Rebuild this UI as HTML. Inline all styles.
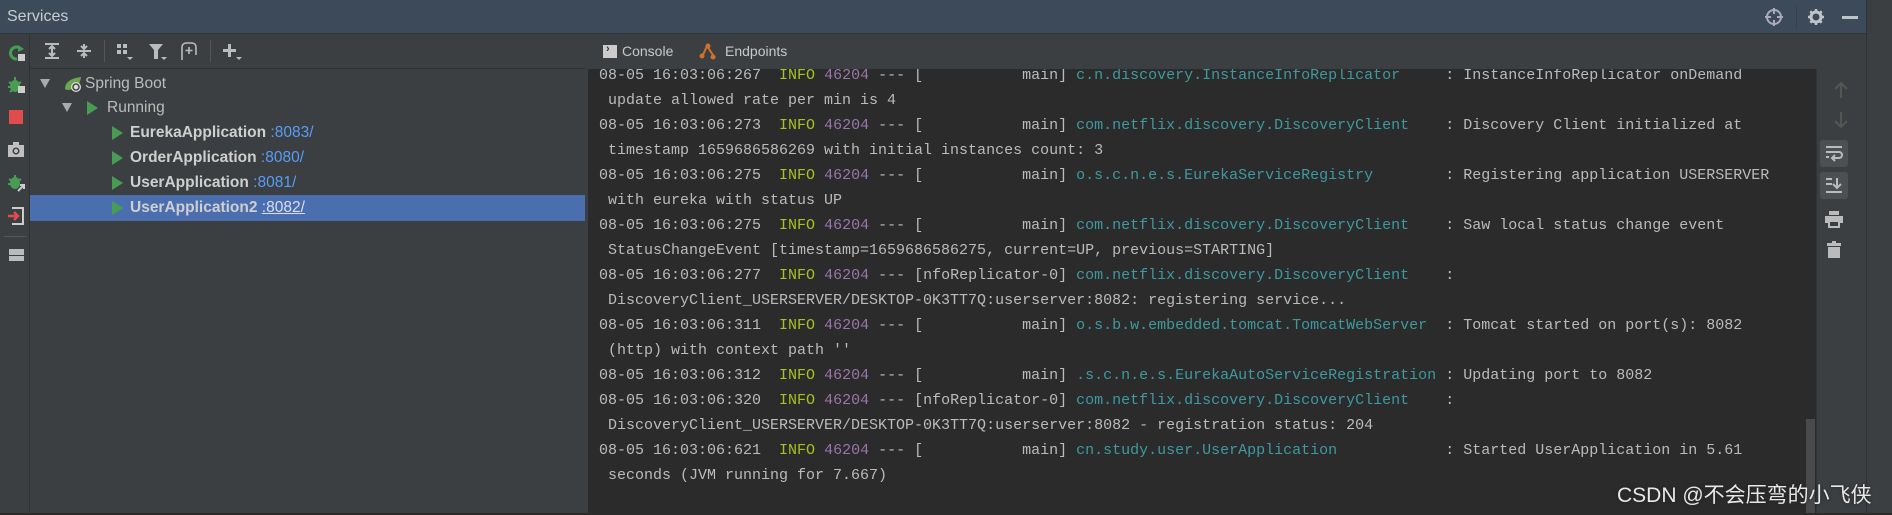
<!DOCTYPE html>
<html><head><meta charset="utf-8"><style>
*{margin:0;padding:0;box-sizing:border-box}
body{width:1892px;height:515px;overflow:hidden;background:#3c3f41;font-family:"Liberation Sans",sans-serif;position:relative;color:#bbb}
.abs{position:absolute}
#title{left:0;top:0;width:1866px;height:34px;background:#3d4a5a;border-bottom:1px solid #2f3640}
#title span{position:absolute;left:7px;top:8px;font-size:16px;color:#c8ccd0}
#rstrip{left:1866px;top:0;width:26px;height:515px;background:#3c3f41;border-left:1px solid #2e3134}
#lcol{left:0;top:34px;width:30px;height:481px;background:#3c3f41;border-right:1px solid #2f3133}
#tree{left:30px;top:34px;width:555px;height:481px;background:#3c3f41}
#tb{left:30px;top:34px;width:555px;height:35px;border-bottom:1px solid #323232}
.row{position:absolute;left:0;width:555px;height:25px;font-size:15.5px;line-height:25px;white-space:nowrap}
.row b{color:#cfcfcf}
.port{color:#589df6}
.sel{background:#4b6eaf}
.tri{position:absolute;width:0;height:0}
.play{border-left:11px solid #499c54;border-top:7px solid transparent;border-bottom:7px solid transparent;top:6px}
.down{border-top:9px solid #aaa;border-left:5px solid transparent;border-right:5px solid transparent;top:8px}
#tabs{left:586px;top:34px;width:1280px;height:35px;background:#3c3f41}
#tabs span{position:absolute;top:9px;font-size:14px;color:#c8c8c8}
#con{left:588px;top:69px;width:1228px;height:445px;background:#2b2b2b;overflow:hidden}
#log{position:absolute;left:11px;top:0px;font-family:"Liberation Mono",monospace;font-size:15px;line-height:25px;color:#bbb;white-space:pre}
.i{color:#a8c023}.p{color:#9876aa}.l{color:#3d9aa0}
#rtb{left:1816px;top:69px;width:50px;height:445px;background:#3c3f41;border-left:1px solid #333}
#bottom{left:0;top:513px;width:1892px;height:2px;background:#2b2b2b}
</style></head><body>
<div class="abs" id="title"><span>Services</span>
<svg class="abs" style="left:1764px;top:7px" width="20" height="20" viewBox="0 0 20 20"><circle cx="10" cy="10" r="7" fill="none" stroke="#aab" stroke-width="2"/><path d="M10 1v6M10 13v6M1 10h6M13 10h6" stroke="#aab" stroke-width="2"/></svg>
<div class="abs" style="left:1796px;top:5px;width:1px;height:24px;background:#33404d"></div>
<svg class="abs" style="left:1807px;top:8px" width="18" height="18" viewBox="0 0 18 18"><circle cx="9" cy="9" r="5" fill="none" stroke="#c0c4c8" stroke-width="3"/><path d="M9 1v4M9 13v4M1 9h4M13 9h4M3.3 3.3l2.5 2.5M12.2 12.2l2.5 2.5M3.3 14.7l2.5-2.5M12.2 5.8l2.5-2.5" stroke="#c0c4c8" stroke-width="2.5"/></svg>
<div class="abs" style="left:1842px;top:16px;width:16px;height:3px;background:#c0c4c8"></div>
</div>
<div class="abs" id="rstrip"></div>
<div class="abs" id="lcol">
<svg class="abs" style="left:8px;top:10px" width="18" height="18" viewBox="0 0 18 18"><path d="M13 5A6 6 0 1 0 9 15" fill="none" stroke="#499c54" stroke-width="3"/><path d="M10 1l6 4-6 3z" fill="#499c54"/><rect x="10" y="10" width="7" height="7" fill="#ccc"/></svg>
<svg class="abs" style="left:7px;top:42px" width="18" height="18" viewBox="0 0 18 18"><ellipse cx="8" cy="10" rx="5" ry="6" fill="#499c54"/><path d="M2 6l3 2M14 6l-3 2M1 11h3M12 11h3M3 16l2-2M13 16l-2-2M8 1v3" stroke="#499c54" stroke-width="2"/><rect x="11" y="10" width="7" height="7" fill="#ccc"/></svg>
<div class="abs" style="left:9px;top:76px;width:14px;height:14px;background:#e04c4c"></div>
<svg class="abs" style="left:7px;top:108px" width="18" height="16" viewBox="0 0 18 16"><rect x="1" y="3" width="16" height="12" fill="#c0c0c0"/><rect x="6" y="0" width="6" height="4" fill="#c0c0c0"/><circle cx="9" cy="9" r="3.5" fill="#3c3f41"/><circle cx="9" cy="9" r="2" fill="#c0c0c0"/></svg>
<svg class="abs" style="left:7px;top:140px" width="18" height="18" viewBox="0 0 18 18"><ellipse cx="8" cy="9" rx="5" ry="6" fill="#499c54"/><path d="M2 5l3 2M14 5l-3 2M1 10h3M8 1v3" stroke="#499c54" stroke-width="2"/><path d="M11 17l6-6M13 11h4v4" stroke="#ccc" stroke-width="2" fill="none"/></svg>
<svg class="abs" style="left:7px;top:172px" width="18" height="20" viewBox="0 0 18 20"><path d="M5 2h11v16H5" fill="none" stroke="#ccc" stroke-width="2"/><path d="M1 10h10M7 6l4 4-4 4" fill="none" stroke="#e04c4c" stroke-width="2.5"/></svg>
<div class="abs" style="left:4px;top:202px;width:22px;height:1px;background:#555"></div>
<div class="abs" style="left:9px;top:215px;width:15px;height:6px;background:#bbb"></div>
<div class="abs" style="left:9px;top:222px;width:15px;height:5px;background:#bbb"></div>
</div>
<div class="abs" id="tree">
<div class="row" style="top:37px"><div class="tri down" style="left:10px"></div>
<svg class="abs" style="left:33px;top:4px" width="20" height="18" viewBox="0 0 20 18"><path d="M2 14C2 6 10 3 18 2 17 10 12 15 4 15z" fill="#6aa84f"/><circle cx="13" cy="12" r="5" fill="#ddd"/><circle cx="13" cy="12" r="3" fill="none" stroke="#444" stroke-width="1.5"/></svg>
<span class="abs" style="left:55px">Spring Boot</span></div>
<div class="row" style="top:61px"><div class="tri down" style="left:32px"></div><div class="tri play" style="left:57px"></div><span class="abs" style="left:77px">Running</span></div>
<div class="row" style="top:86px"><div class="tri play" style="left:82px"></div><span class="abs" style="left:100px"><b>EurekaApplication</b> <span class="port">:8083/</span></span></div>
<div class="row" style="top:111px"><div class="tri play" style="left:82px"></div><span class="abs" style="left:100px"><b>OrderApplication</b> <span class="port">:8080/</span></span></div>
<div class="row" style="top:136px"><div class="tri play" style="left:82px"></div><span class="abs" style="left:100px"><b>UserApplication</b> <span class="port">:8081/</span></span></div>
<div class="row sel" style="top:161px;height:26px"><div class="tri play" style="left:82px"></div><span class="abs" style="left:100px"><b>UserApplication2</b> <span style="color:#dde;text-decoration:underline">:8082/</span></span></div>
</div>
<div class="abs" id="tb">
<svg class="abs" style="left:14px;top:9px" width="16" height="16" viewBox="0 0 16 16" stroke="#bbb" stroke-width="2" fill="none"><path d="M1 1h14M1 15h14M8 4v8M5 6l3-3 3 3M5 10l3 3 3-3"/></svg>
<svg class="abs" style="left:46px;top:9px" width="16" height="16" viewBox="0 0 16 16" stroke="#bbb" stroke-width="2" fill="none"><path d="M1 8h14M8 1v4M5 3l3 3 3-3M8 15v-4M5 13l3-3 3 3"/></svg>
<div class="abs" style="left:74px;top:6px;width:1px;height:22px;background:#555"></div>
<svg class="abs" style="left:86px;top:9px" width="18" height="18" viewBox="0 0 18 18" fill="#bbb"><rect x="1" y="1" width="4" height="4"/><rect x="7" y="1" width="4" height="4"/><rect x="1" y="7" width="4" height="4"/><rect x="7" y="7" width="4" height="4"/><path d="M11 14h6l-3 3z"/></svg>
<svg class="abs" style="left:118px;top:9px" width="20" height="18" viewBox="0 0 20 18" fill="#bbb"><path d="M1 1h14l-5 6v9H6V7z"/><path d="M13 14h6l-3 3z"/></svg>
<svg class="abs" style="left:150px;top:8px" width="18" height="18" viewBox="0 0 18 18" stroke="#bbb" stroke-width="1.6" fill="none"><path d="M2 18V5a4 4 0 0 1 4-4h6a4 4 0 0 1 4 4v8M9 5v7M5.5 8.5h7"/></svg>
<div class="abs" style="left:180px;top:6px;width:1px;height:22px;background:#555"></div>
<svg class="abs" style="left:193px;top:9px" width="20" height="18" viewBox="0 0 20 18" fill="#bbb"><path d="M5 1h3v5h5v3H8v5H5V9H0V6h5z"/><path d="M13 14h6l-3 3z"/></svg>
</div>
<div class="abs" id="tabs">
<div class="abs" style="left:17px;top:11px;width:14px;height:13px;background:#ccc"></div><span style="left:20px;top:9px;font-size:11px;color:#333;font-weight:bold">›</span>
<span style="left:36px">Console</span>
<svg class="abs" style="left:113px;top:8px" width="18" height="18" viewBox="0 0 18 18"><path d="M3 15L8 4l8 12" fill="none" stroke="#d0702a" stroke-width="2"/><circle cx="3" cy="14" r="2.5" fill="#d0702a"/><circle cx="9" cy="4" r="2.5" fill="#d0702a"/><circle cx="14" cy="15" r="2.5" fill="#d0702a"/></svg>
<span style="left:139px">Endpoints</span>
</div>
<div class="abs" id="con"><div id="log" style="top:-6px">08-05 16:03:06:267  <span class="i">INFO</span> <span class="p">46204</span> --- [           main] <span class="l">c.n.discovery.InstanceInfoReplicator    </span> : InstanceInfoReplicator onDemand
 update allowed rate per min is 4
08-05 16:03:06:273  <span class="i">INFO</span> <span class="p">46204</span> --- [           main] <span class="l">com.netflix.discovery.DiscoveryClient   </span> : Discovery Client initialized at
 timestamp 1659686586269 with initial instances count: 3
08-05 16:03:06:275  <span class="i">INFO</span> <span class="p">46204</span> --- [           main] <span class="l">o.s.c.n.e.s.EurekaServiceRegistry       </span> : Registering application USERSERVER
 with eureka with status UP
08-05 16:03:06:275  <span class="i">INFO</span> <span class="p">46204</span> --- [           main] <span class="l">com.netflix.discovery.DiscoveryClient   </span> : Saw local status change event
 StatusChangeEvent [timestamp=1659686586275, current=UP, previous=STARTING]
08-05 16:03:06:277  <span class="i">INFO</span> <span class="p">46204</span> --- [nfoReplicator-0] <span class="l">com.netflix.discovery.DiscoveryClient   </span> :
 DiscoveryClient_USERSERVER/DESKTOP-0K3TT7Q:userserver:8082: registering service...
08-05 16:03:06:311  <span class="i">INFO</span> <span class="p">46204</span> --- [           main] <span class="l">o.s.b.w.embedded.tomcat.TomcatWebServer </span> : Tomcat started on port(s): 8082
 (http) with context path ''
08-05 16:03:06:312  <span class="i">INFO</span> <span class="p">46204</span> --- [           main] <span class="l">.s.c.n.e.s.EurekaAutoServiceRegistration</span> : Updating port to 8082
08-05 16:03:06:320  <span class="i">INFO</span> <span class="p">46204</span> --- [nfoReplicator-0] <span class="l">com.netflix.discovery.DiscoveryClient   </span> :
 DiscoveryClient_USERSERVER/DESKTOP-0K3TT7Q:userserver:8082 - registration status: 204
08-05 16:03:06:621  <span class="i">INFO</span> <span class="p">46204</span> --- [           main] <span class="l">cn.study.user.UserApplication           </span> : Started UserApplication in 5.61
 seconds (JVM running for 7.667)</div>
<div class="abs" style="left:1218px;top:350px;width:9px;height:95px;background:#4a4a4a"></div>
</div>
<div class="abs" id="rtb">
<svg class="abs" style="left:16px;top:12px" width="16" height="18" viewBox="0 0 16 18" stroke="#555" stroke-width="2" fill="none"><path d="M8 17V2M2 8l6-6 6 6"/></svg>
<svg class="abs" style="left:16px;top:42px" width="16" height="18" viewBox="0 0 16 18" stroke="#555" stroke-width="2" fill="none"><path d="M8 1v15M2 10l6 6 6-6"/></svg>
<div class="abs" style="left:3px;top:71px;width:28px;height:27px;background:#4c5052;border-radius:3px"></div>
<svg class="abs" style="left:8px;top:76px" width="18" height="17" viewBox="0 0 18 17" stroke="#bbb" stroke-width="2" fill="none"><path d="M1 2h16M1 7h13a3 3 0 0 1 0 6H8M10 10l-3 3 3 3M1 12h3"/></svg>
<div class="abs" style="left:3px;top:103px;width:28px;height:27px;background:#4c5052;border-radius:3px"></div>
<svg class="abs" style="left:8px;top:108px" width="18" height="17" viewBox="0 0 18 17" stroke="#bbb" stroke-width="2" fill="none"><path d="M1 2h6M1 7h6M12 1v10M8 7l4 4 4-4M1 15h16"/></svg>
<svg class="abs" style="left:8px;top:142px" width="18" height="17" viewBox="0 0 18 17" fill="#bbb"><rect x="4" y="0" width="10" height="4"/><rect x="0" y="5" width="18" height="7"/><rect x="4" y="10" width="10" height="6" fill="#3c3f41" stroke="#bbb" stroke-width="2"/></svg>
<svg class="abs" style="left:10px;top:172px" width="14" height="17" viewBox="0 0 14 17" fill="#bbb"><rect x="0" y="2" width="14" height="3"/><rect x="5" y="0" width="4" height="2"/><rect x="1" y="6" width="12" height="11"/></svg>
</div>
<div class="abs" id="bottom"></div>
<div class="abs" style="left:1617px;top:479px;font-size:21px;color:#e8e8e8;text-shadow:0 0 3px #222;font-family:'Liberation Sans','Noto Sans CJK SC',sans-serif;white-space:nowrap">CSDN @不会压弯的小飞侠</div>
</body></html>
